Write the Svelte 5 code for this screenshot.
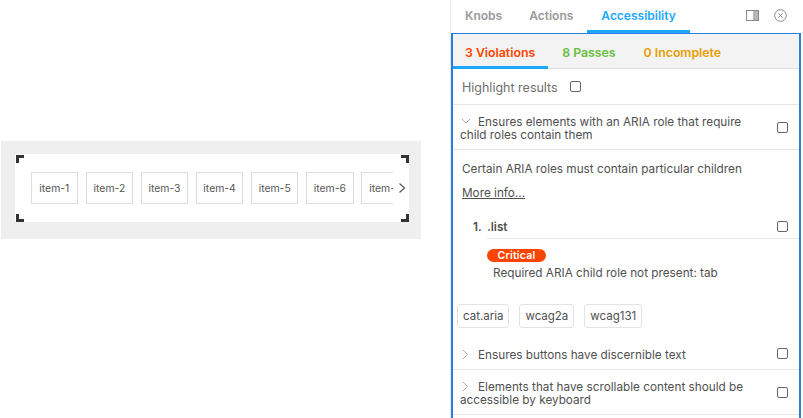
<script>
  const items = ["item-1", "item-2", "item-3", "item-4", "item-5", "item-6", "item-7"];
  const tags = ["cat.aria", "wcag2a", "wcag131"];
</script>

<div class="page">
  <section class="canvas">
    <div class="stage">
      <div class="frame">
        <i class="corner tl"></i>
        <i class="corner tr"></i>
        <i class="corner bl"></i>
        <i class="corner br"></i>
        <div class="list">
          {#each items as item}
            <div class="item">{item}</div>
          {/each}
        </div>
        <svg class="next" width="8" height="12" viewBox="0 0 8 12">
          <path d="M1.5 1.5 L6.5 6 L1.5 10.5" fill="none" stroke="#555" stroke-width="1.2" />
        </svg>
      </div>
    </div>
  </section>

  <aside class="addons">
    <header class="tabs">
      <span class="tab">Knobs</span>
      <span class="tab">Actions</span>
      <span class="tab active">Accessibility</span>
      <div class="tools">
        <svg width="13" height="11" viewBox="0 0 13 11">
          <rect x="0.5" y="0.5" width="12" height="10" fill="none" stroke="#888" />
          <rect x="7" y="1" width="5" height="9" fill="#b5b5b5" />
        </svg>
        <svg width="13" height="13" viewBox="0 0 13 13">
          <circle cx="6.5" cy="6.5" r="5.8" fill="none" stroke="#888" />
          <path d="M4.4 4.4 L8.6 8.6 M8.6 4.4 L4.4 8.6" stroke="#888" />
        </svg>
      </div>
    </header>

    <div class="panel">
      <nav class="subtabs">
        <span class="sub violations">3 Violations</span>
        <span class="sub passes">8 Passes</span>
        <span class="sub incomplete">0 Incomplete</span>
      </nav>

      <div class="highlight">
        <span class="label">Highlight results</span>
        <span class="box"></span>
      </div>

      <div class="rule">
        <p>
          <svg class="chev" width="10" height="7" viewBox="0 0 10 7">
            <path d="M1 1 L5 5 L9 1" fill="none" stroke="#aaa" />
          </svg>Ensures elements with an ARIA role that require child roles contain them
        </p>
        <span class="box"></span>
      </div>

      <div class="detail">
        <p class="desc">Certain ARIA roles must contain particular children</p>
        <span class="more">More info...</span>
      </div>

      <div class="element">
        <strong class="num">1.</strong>
        <div class="el-main">
          <div class="el-title">
            <strong>.list</strong>
            <span class="box"></span>
          </div>
          <span class="critical">Critical</span>
          <p class="message">Required ARIA child role not present: tab</p>
        </div>
      </div>

      <div class="tags">
        {#each tags as tag}
          <span class="tag">{tag}</span>
        {/each}
      </div>

      <div class="rule">
        <p>
          <svg class="chev right" width="7" height="11" viewBox="0 0 7 11">
            <path d="M1 1 L5.5 5.5 L1 10" fill="none" stroke="#aaa" />
          </svg>Ensures buttons have discernible text
        </p>
        <span class="box"></span>
      </div>

      <div class="rule">
        <p>
          <svg class="chev right" width="7" height="11" viewBox="0 0 7 11">
            <path d="M1 1 L5.5 5.5 L1 10" fill="none" stroke="#aaa" />
          </svg>Elements that have scrollable content should be accessible by keyboard
        </p>
        <span class="box"></span>
      </div>
    </div>
  </aside>
</div>

<style>
  :global(body) {
    margin: 0;
    background: #fff;
    font-family: Inter, "Liberation Sans", sans-serif;
    color: #505050;
    overflow: hidden;
  }
  p {
    margin: 0;
  }

  .page {
    display: flex;
    width: 803px;
    height: 418px;
    overflow: hidden;
  }

  .canvas {
    width: 450px;
    flex: none;
    padding: 141px 0 0 1px;
    box-sizing: border-box;
  }
  .stage {
    width: 420px;
    height: 98px;
    box-sizing: border-box;
    padding: 13px 12px 17px 14px;
    background: #efefef;
  }
  .frame {
    position: relative;
    display: flex;
    align-items: center;
    height: 68px;
    padding-left: 15.5px;
    background: #fff;
  }
  .corner {
    position: absolute;
    width: 5px;
    height: 5px;
    border: 0 solid #333;
  }
  .tl { left: 1px; top: 1px; border-width: 3px 0 0 3px; }
  .tr { right: 0; top: 1px; border-width: 3px 3px 0 0; }
  .bl { left: 1px; bottom: 0; border-width: 0 0 3px 3px; }
  .br { right: 0; bottom: 0; border-width: 0 3px 3px 0; }

  .list {
    display: flex;
    flex: none;
    gap: 7.5px;
    width: 362.5px;
    overflow: hidden;
  }
  .item {
    flex: none;
    width: 47.6px;
    height: 32px;
    box-sizing: border-box;
    border: 1px solid #ddd;
    font-size: 10.4px;
    line-height: 31px;
    text-align: center;
    color: #555;
  }
  .next {
    flex: none;
    margin-left: 5px;
  }

  .addons {
    flex: 1;
    min-width: 0;
    display: flex;
    flex-direction: column;
    border-left: 1px solid #ececec;
  }
  .tabs {
    display: flex;
    height: 33px;
    flex: none;
    padding-left: 1px;
    font-size: 12px;
    font-weight: 600;
  }
  .tab {
    padding: 0 13px;
    line-height: 32px;
    margin-right: 1px;
    color: #999;
  }
  .tab.active {
    padding: 0 14px;
    margin-right: 0;
    color: #1ea7fd;
    border-bottom: 3px solid #1ea7fd;
  }
  .tools {
    margin-left: auto;
    display: flex;
    align-items: center;
    gap: 15px;
    height: 30px;
    padding-right: 16px;
  }

  .panel {
    flex: 1;
    margin-right: 2px;
    border: solid #2a7de1;
    border-width: 1px 2px 0 2px;
    font-size: 11.75px;
    overflow: hidden;
  }
  .subtabs {
    display: flex;
    height: 35px;
    box-sizing: border-box;
    background: #f3f3f3;
    border-bottom: 1px solid #e0e0e0;
    font-weight: 600;
    font-size: 12.3px;
  }
  .sub {
    padding: 2px 14px 0;
    line-height: 33px;
  }
  .violations {
    height: 35px;
    box-sizing: border-box;
    padding: 2px 13px 0 12px;
    color: #ff4400;
    border-bottom: 3px solid #1ea7fd;
  }
  .passes { color: #66bf3c; }
  .incomplete { color: #e69d00; }

  .box {
    flex: none;
    width: 11px;
    height: 11px;
    box-sizing: border-box;
    border: 1px solid #666;
    border-radius: 2px;
    background: #fff;
  }

  .highlight {
    display: flex;
    align-items: center;
    gap: 12px;
    height: 36px;
    box-sizing: border-box;
    padding-left: 9px;
    border-bottom: 1px solid #e6e6e6;
    font-size: 12.5px;
    color: #707070;
  }
  .label {
    padding-top: 2px;
  }
  .rule {
    display: flex;
    align-items: center;
    justify-content: space-between;
    padding: 7px 11px 7px 7px;
    border-bottom: 1px solid #e6e6e6;
    line-height: 13px;
  }
  .rule p {
    width: 300px;
    padding-top: 4px;
  }
  .chev {
    margin: 0 7px 1px 1px;
  }
  .chev.right {
    margin: 0 9px 0 2px;
    vertical-align: -1px;
  }

  .detail {
    padding: 11px 9px 0;
  }
  .desc {
    line-height: 16px;
  }
  .more {
    display: block;
    margin-top: 8px;
    line-height: 16px;
    text-decoration: underline;
  }

  .element {
    display: flex;
    margin-top: 13px;
    padding-left: 20px;
  }
  .num {
    width: 14px;
    line-height: 26px;
    font-weight: 600;
  }
  .el-main {
    flex: 1;
  }
  .el-title {
    display: flex;
    justify-content: space-between;
    align-items: center;
    height: 25px;
    box-sizing: border-box;
    padding-right: 11px;
    border-bottom: 1px solid #e6e6e6;
  }
  .el-title strong {
    padding-top: 2px;
    font-weight: 600;
  }
  .critical {
    display: block;
    width: 59px;
    height: 13px;
    margin-top: 10px;
    border-radius: 7px;
    background: #ff4400;
    color: #fff;
    font-size: 10.5px;
    font-weight: 600;
    letter-spacing: 0.2px;
    line-height: 13px;
    text-align: center;
  }
  .message {
    margin: 3px 0 0 6px;
    line-height: 16px;
  }

  .tags {
    display: flex;
    gap: 10px;
    padding: 23px 0 0 4px;
    margin-bottom: 10px;
  }
  .tag {
    height: 24px;
    box-sizing: border-box;
    padding: 0 5px;
    border: 1px solid #e3e3e3;
    border-radius: 3px;
    line-height: 23px;
    font-size: 11.5px;
  }
</style>
